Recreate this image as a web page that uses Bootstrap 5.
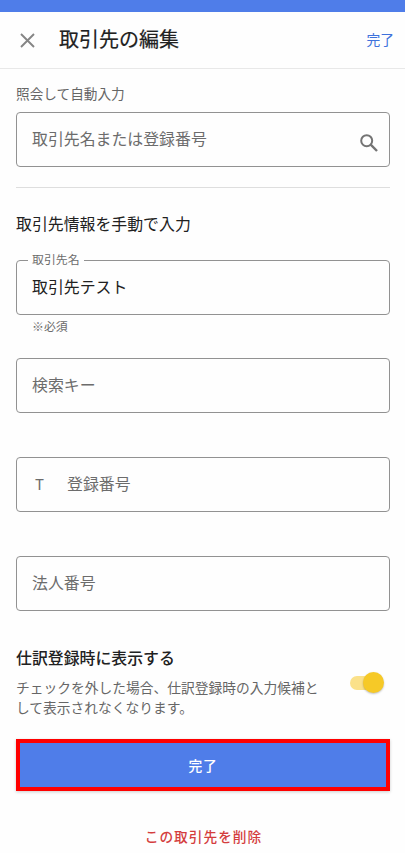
<!DOCTYPE html>
<html lang="ja">
<head>
<meta charset="utf-8">
<meta name="viewport" content="width=device-width, initial-scale=1">
<title>取引先の編集</title>
<link href="https://cdn.jsdelivr.net/npm/bootstrap@5.3.0/dist/css/bootstrap.min.css" rel="stylesheet">
<style>
body{font-family:"Noto Sans CJK JP",sans-serif;color:#212121;background:#fefefe;height:853px;overflow:hidden}
.status-strip{height:12px;background:#4f7de9}
.app-header{height:57px;border-bottom:1px solid #e8e8e8;padding:0 11px 2px 20px}
.app-header svg{margin-top:2px}
.page-title{font-size:20px;line-height:28px;margin-left:24px;font-weight:400;-webkit-text-stroke:.2px}
.done-link{font-size:13.8px;color:#3f72dc;line-height:20px}
.form-area{padding:14px 15px 0 16px}
.hint{font-size:13.65px;line-height:20px;color:#666}
.outlined{height:55px;border:1px solid #929292;border-radius:4px;padding:0 11px 1px 15px;font-size:15.9px;line-height:24px;color:#6c6c6c}
.outlined svg{margin-top:7px}
.lookup{margin-top:9px;height:55px}
.filled{margin-top:24px;color:#212121}
.float-label{left:11px;top:-11px;padding:0 4px;background:#fefefe;font-size:11.9px;line-height:18px;color:#6c6c6c}
.rule{height:1px;background:#dedede;margin-top:20px}
.section-title{font-size:15.9px;line-height:24px;font-weight:400}
.manual-title{margin-top:24px}
.helper{font-size:11.9px;line-height:18px;color:#6c6c6c;padding-left:16px;margin-top:2px}
.search-key{margin-top:23px}
.spaced{margin-top:44px}
.prefix{width:35px;padding-left:3px;font-size:15px}
.toggle-row{margin-top:35px}
.toggle-title{font-weight:500}
.toggle-note{font-size:13.75px;margin-top:7px}
.switch-track{width:31px;height:14px;border-radius:7px;background:#fbe18a;margin:2px 9px 0 0}
.switch-knob{width:21px;height:21px;background:#f6c927;right:-3px;top:-4px;box-shadow:0 1px 2px rgba(0,0,0,.25)}
.submit{height:52px;margin-top:22px;border:4px solid #f00!important;border-radius:0;background:#4f7de9!important;color:#fff!important;font-size:13.8px;letter-spacing:.6px;font-weight:500;box-shadow:0 1px 3px rgba(0,0,0,.2)}
.remove{font-size:13.7px;line-height:20px;letter-spacing:1px;color:#d43d3d;font-weight:500;margin-top:35px;padding-left:1px}
</style>
</head>
<body>
<div class="status-strip"></div>
<header class="app-header d-flex align-items-center">
  <svg width="15" height="15" viewBox="0 0 15 15" fill="none" stroke="#858585" stroke-width="1.9"><path d="M1 1L14 14M14 1L1 14"/></svg>
  <h1 class="page-title mb-0">取引先の編集</h1>
  <a class="done-link ms-auto text-decoration-none" href="#">完了</a>
</header>
<main class="form-area d-flex flex-column">
  <div class="hint">照会して自動入力</div>
  <div class="outlined lookup d-flex align-items-center justify-content-between">
    <span>取引先名または登録番号</span>
    <svg width="18" height="18" viewBox="0 0 18 18" fill="none" stroke="#747474" stroke-width="2"><circle cx="6.7" cy="6.7" r="5.5"/><path d="M10.7 10.7L17 17" stroke-width="2.4"/></svg>
  </div>
  <div class="rule"></div>
  <h2 class="section-title manual-title mb-0">取引先情報を手動で入力</h2>
  <div class="outlined filled position-relative d-flex align-items-center">
    <span class="float-label position-absolute">取引先名</span>
    <span>取引先テスト</span>
  </div>
  <div class="helper">※必須</div>
  <div class="outlined search-key d-flex align-items-center">検索キー</div>
  <div class="outlined spaced d-flex align-items-center"><span class="prefix">T</span><span>登録番号</span></div>
  <div class="outlined spaced d-flex align-items-center">法人番号</div>
  <div class="toggle-row d-flex justify-content-between align-items-center">
    <div>
      <div class="section-title toggle-title">仕訳登録時に表示する</div>
      <div class="hint toggle-note text-nowrap">チェックを外した場合、仕訳登録時の入力候補と<br>して表示されなくなります。</div>
    </div>
    <div class="switch-track position-relative"><div class="switch-knob position-absolute rounded-circle"></div></div>
  </div>
  <button class="submit btn p-0" type="button">完了</button>
  <a class="remove text-center text-decoration-none" href="#">この取引先を削除</a>
</main>
<script src="https://cdn.jsdelivr.net/npm/bootstrap@5.3.0/dist/js/bootstrap.bundle.min.js"></script>
</body>
</html>
